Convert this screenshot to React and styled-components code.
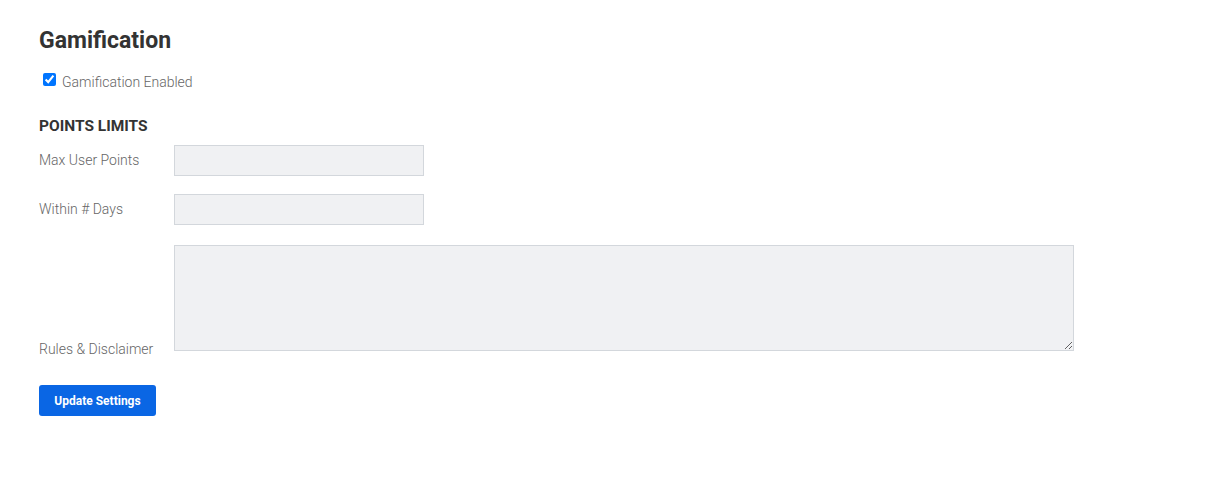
import React from "react";
import styled, { createGlobalStyle } from "styled-components";

const Global = createGlobalStyle`
  html, body { margin: 0; padding: 0; background: #fff; }
  body { font-family: Roboto, "Noto Sans", sans-serif; }
  * { box-sizing: border-box; }
`;

const Page = styled.div`
  padding: 25px 39px;
  width: 1218px;
  height: 495px;
`;

const Title = styled.h2`
  margin: 0;
  font-size: 23px;
  font-weight: 700;
  color: #333;
  line-height: 32px;
`;

const CheckRow = styled.label`
  display: flex;
  align-items: flex-start;
  gap: 6px;
  margin-top: 16px;
  margin-left: 4px;
  font-size: 14px;
  font-weight: 300;
  color: #666;
  line-height: 18px;
`;

const Check = styled.input`
  margin: 0;
  width: 13px;
  height: 13px;
  accent-color: #0075ff;
`;

const Section = styled.h3`
  margin: 25px 0 0;
  font-size: 15.5px;
  font-weight: 700;
  color: #333;
  line-height: 20px;
`;

const Row = styled.div`
  display: flex;
  align-items: ${(p) => (p.$bottom ? "flex-end" : "center")};
  margin-top: ${(p) => p.$mt}px;
`;

const Label = styled.label`
  width: 135px;
  font-size: 14px;
  font-weight: 300;
  color: #666;
  line-height: 18px;
  margin-bottom: ${(p) => (p.$bottom ? "-7px" : "2px")};
`;

const Input = styled.input`
  width: 250px;
  height: 31px;
  background: #f0f1f3;
  border: 1px solid #d3d7dc;
  border-radius: 0;
  margin: 0;
  padding: 4px 8px;
  font-family: inherit;
`;

const Area = styled.textarea`
  width: 900px;
  height: 106px;
  background: #f0f1f3;
  border: 1px solid #d3d7dc;
  border-radius: 0;
  margin: 0;
  padding: 4px 8px;
  font-family: inherit;
  display: block;
`;

const Button = styled.button`
  margin-top: 34px;
  width: 117px;
  height: 31px;
  background: #0a66e4;
  color: #fff;
  border: none;
  border-radius: 3px;
  font-family: Roboto, sans-serif;
  font-weight: 700;
  font-size: 12px;
  padding: 0;
  display: block;
`;

export default function App() {
  return (
    <Page>
      <Global />
      <Title>Gamification</Title>
      <CheckRow>
        <Check type="checkbox" defaultChecked />
        Gamification Enabled
      </CheckRow>
      <Section>POINTS LIMITS</Section>
      <Row $mt={9}>
        <Label>Max User Points</Label>
        <Input />
      </Row>
      <Row $mt={18}>
        <Label>Within # Days</Label>
        <Input />
      </Row>
      <Row $mt={20} $bottom>
        <Label $bottom>Rules &amp; Disclaimer</Label>
        <Area />
      </Row>
      <Button>Update Settings</Button>
    </Page>
  );
}
